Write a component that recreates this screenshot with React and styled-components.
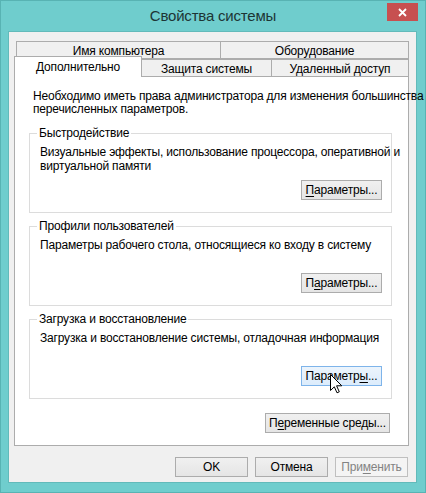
import styled, { createGlobalStyle } from "styled-components";

const Global = createGlobalStyle`
  html, body {
    margin: 0;
    padding: 0;
    background: #6fcdcd;
  }
  * { box-sizing: border-box; }
`;

const Window = styled.div`
  width: 426px;
  height: 493px;
  background: #6fcdcd;
  border: 1px solid #58b3b3;
  display: flex;
  flex-direction: column;
  font-family: "Liberation Sans", Arial, sans-serif;
  font-size: 12px;
  letter-spacing: -0.18px;
  color: #000;
`;

const TitleBar = styled.div`
  height: 30px;
  display: grid;
  grid-template-columns: 1fr auto 1fr;
  align-items: start;
`;

const Title = styled.div`
  grid-column: 2;
  font-size: 15px;
  letter-spacing: -0.2px;
  line-height: 18px;
  padding-top: 6px;
  color: #1d3535;
`;

const Close = styled.div`
  grid-column: 3;
  justify-self: end;
  margin: 2px 7px 0 0;
  width: 31px;
  height: 18px;
  background: #c75050;
  display: flex;
  align-items: center;
  justify-content: center;
`;

const Client = styled.div`
  flex: 1;
  margin: 0 8px 9px 7px;
  background: #f0f0f0;
  border: 1px solid #62baba;
  padding: 9px 7px 0 5px;
  display: flex;
  flex-direction: column;
`;

const TabRow = styled.div`
  display: flex;
  padding-left: ${(p) => p.$indent}px;
`;

const Tab = styled.div`
  width: ${(p) => p.$w}px;
  height: ${(p) => (p.$active ? 21 : 18)}px;
  margin-left: -1px;
  margin-top: ${(p) => (p.$active ? -3 : 0)}px;
  background: ${(p) => (p.$active ? "#fff" : "#f0f0f0")};
  border: 1px solid #acacac;
  border-bottom: ${(p) => (p.$active ? "none" : "1px solid #acacac")};
  position: relative;
  z-index: ${(p) => (p.$active ? 2 : 1)};
  display: flex;
  justify-content: center;
  padding-top: ${(p) => (p.$active ? 3 : 2)}px;
  line-height: 14px;
  white-space: nowrap;
  &:first-child { margin-left: 0; }
`;

const Panel = styled.div`
  margin-top: -1px;
  height: 370px;
  background: #fff;
  border: 1px solid #acacac;
  padding: 13px 16px 0 14px;
  display: flex;
  flex-direction: column;
`;

const Intro = styled.div`
  padding-left: 4px;
  line-height: 13px;
  white-space: nowrap;
`;

const Group = styled.fieldset`
  margin: ${(p) => p.$top}px 0 0 0;
  padding: 5px 9px 12px 10px;
  border: 1px solid #dcdcdc;
  min-width: 0;
`;

const Legend = styled.legend`
  padding: 0 2px;
  margin-left: -3px;
  line-height: 14px;
`;

const GroupBody = styled.div`
  height: 55px;
  display: flex;
  flex-direction: column;
`;

const GroupText = styled.div`
  line-height: 14px;
  white-space: nowrap;
`;

const Button = styled.div`
  position: relative;
  width: ${(p) => p.$w}px;
  height: 20px;
  border: 1px solid ${(p) => (p.$hover ? "#7eb4ea" : p.$disabled ? "#bfbfbf" : "#acacac")};
  background: ${(p) =>
    p.$hover
      ? "linear-gradient(#ecf4fc, #dcecfc)"
      : p.$disabled
      ? "#f4f4f4"
      : "linear-gradient(#f0f0f0, #e5e5e5)"};
  color: ${(p) => (p.$disabled ? "#838383" : "#000")};
  display: flex;
  align-items: center;
  justify-content: center;
  line-height: 14px;
  white-space: nowrap;
`;

const ButtonRow = styled.div`
  margin-top: auto;
  display: flex;
  justify-content: flex-end;
`;

const EnvRow = styled.div`
  margin-top: 14px;
  padding-right: 2px;
  display: flex;
  justify-content: flex-end;
`;

const Footer = styled.div`
  margin-top: 11px;
  display: flex;
  justify-content: flex-end;
  gap: 7px;
  padding-right: 1px;
`;

const Cursor = styled.svg`
  position: absolute;
  left: 28px;
  top: 7px;
`;

const U = styled.span`
  text-decoration: underline;
  text-underline-offset: 2px;
`;

function Params({ pre, key2, post, hover }) {
  return (
    <ButtonRow>
      <Button $w={81} $hover={hover}>
        {pre}
        <U>{key2}</U>
        {post}
        {hover && (
          <Cursor width="13" height="20" viewBox="0 0 13 20">
            <path
              d="M0.5 0.5 L0.5 16.5 L4.3 12.8 L7 18.8 L9.3 17.8 L6.6 11.8 L11.8 11.8 Z"
              fill="#fff"
              stroke="#000"
              strokeWidth="1"
            />
          </Cursor>
        )}
      </Button>
    </ButtonRow>
  );
}

export default function App() {
  return (
    <>
      <Global />
      <Window>
        <TitleBar>
          <Title>Свойства системы</Title>
          <Close>
            <svg width="9" height="9" viewBox="0 0 9 9">
              <path d="M1 1 L8 8 M8 1 L1 8" stroke="#fff" strokeWidth="1.8" />
            </svg>
          </Close>
        </TitleBar>
        <Client>
          <TabRow $indent={2}>
            <Tab $w={205}>Имя компьютера</Tab>
            <Tab $w={189}>Оборудование</Tab>
          </TabRow>
          <TabRow $indent={0}>
            <Tab $w={128} $active>
              Дополнительно
            </Tab>
            <Tab $w={131}>Защита системы</Tab>
            <Tab $w={138}>Удаленный доступ</Tab>
          </TabRow>
          <Panel>
            <Intro>
              Необходимо иметь права администратора для изменения большинства
              <br />
              перечисленных параметров.
            </Intro>
            <Group $top={10}>
              <Legend>Быстродействие</Legend>
              <GroupBody>
                <GroupText>
                  Визуальные эффекты, использование процессора, оперативной и
                  <br />
                  виртуальной памяти
                </GroupText>
                <Params pre="" key2="П" post="араметры..." />
              </GroupBody>
            </Group>
            <Group $top={6}>
              <Legend>Профили пользователей</Legend>
              <GroupBody>
                <GroupText>
                  Параметры рабочего стола, относящиеся ко входу в систему
                </GroupText>
                <Params pre="П" key2="а" post="раметры..." />
              </GroupBody>
            </Group>
            <Group $top={6}>
              <Legend>Загрузка и восстановление</Legend>
              <GroupBody>
                <GroupText>
                  Загрузка и восстановление системы, отладочная информация
                </GroupText>
                <Params pre="Параметр" key2="ы" post="..." hover />
              </GroupBody>
            </Group>
            <EnvRow>
              <Button $w={125}>
                П<U>е</U>ременные среды...
              </Button>
            </EnvRow>
          </Panel>
          <Footer>
            <Button $w={73}>OK</Button>
            <Button $w={73}>Отмена</Button>
            <Button $w={73} $disabled>
              При<U>м</U>енить
            </Button>
          </Footer>
        </Client>
      </Window>
    </>
  );
}
